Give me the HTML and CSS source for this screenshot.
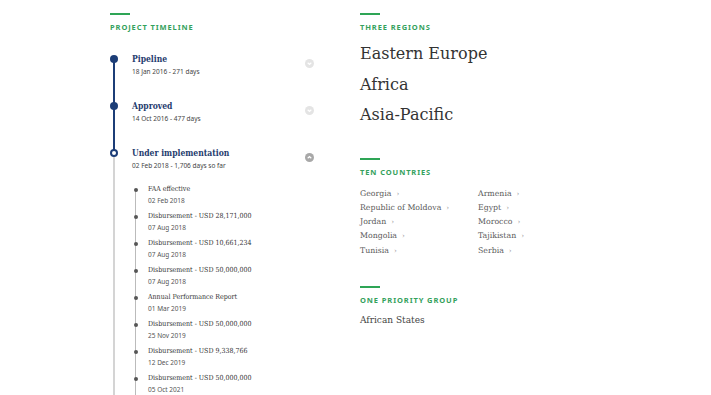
FILE: index.html
```html
<!DOCTYPE html>
<html lang="en">
<head>
    <meta charset="UTF-8">
    <meta name="viewport" content="width=device-width, initial-scale=1.0">
    <title>Project overview</title>
    <link rel="stylesheet" href="styles.css">
</head>
<body>
    <div class="page">
        <section class="col timeline-col">
            <div class="label">Project timeline</div>
            <ol class="stages">
                <li class="stage done">
                    <div class="stage-head">
                        <div>
                            <div class="stage-title">Pipeline</div>
                            <div class="stage-date">18 Jan 2016 - 271 days</div>
                        </div>
                        <span class="toggle"><svg viewBox="0 0 10 10"><path d="M3 4.2 5 6 7 4.2" /></svg></span>
                    </div>
                </li>
                <li class="stage done">
                    <div class="stage-head">
                        <div>
                            <div class="stage-title">Approved</div>
                            <div class="stage-date">14 Oct 2016 - 477 days</div>
                        </div>
                        <span class="toggle"><svg viewBox="0 0 10 10"><path d="M3 4.2 5 6 7 4.2" /></svg></span>
                    </div>
                </li>
                <li class="stage current">
                    <div class="stage-head">
                        <div>
                            <div class="stage-title">Under implementation</div>
                            <div class="stage-date">02 Feb 2018 - 1,706 days so far</div>
                        </div>
                        <span class="toggle open"><svg viewBox="0 0 10 10"><path d="M3 5.8 5 4 7 5.8" /></svg></span>
                    </div>
                    <ul class="events">
                        <li class="event"><div class="event-title">FAA effective</div><div class="event-date">02 Feb 2018</div></li>
                        <li class="event"><div class="event-title">Disbursement - USD 28,171,000</div><div class="event-date">07 Aug 2018</div></li>
                        <li class="event"><div class="event-title">Disbursement - USD 10,661,234</div><div class="event-date">07 Aug 2018</div></li>
                        <li class="event"><div class="event-title">Disbursement - USD 50,000,000</div><div class="event-date">07 Aug 2018</div></li>
                        <li class="event"><div class="event-title">Annual Performance Report</div><div class="event-date">01 Mar 2019</div></li>
                        <li class="event"><div class="event-title">Disbursement - USD 50,000,000</div><div class="event-date">25 Nov 2019</div></li>
                        <li class="event"><div class="event-title">Disbursement - USD 9,338,766</div><div class="event-date">12 Dec 2019</div></li>
                        <li class="event"><div class="event-title">Disbursement - USD 50,000,000</div><div class="event-date">05 Oct 2021</div></li>
                    </ul>
                </li>
            </ol>
        </section>

        <section class="col info-col">
            <div class="label">Three regions</div>
            <ul class="regions">
                <li>Eastern Europe</li>
                <li>Africa</li>
                <li>Asia-Pacific</li>
            </ul>

            <div class="label">Ten countries</div>
            <ul class="countries">
                <li>Georgia</li>
                <li>Armenia</li>
                <li>Republic of Moldova</li>
                <li>Egypt</li>
                <li>Jordan</li>
                <li>Morocco</li>
                <li>Mongolia</li>
                <li>Tajikistan</li>
                <li>Tunisia</li>
                <li>Serbia</li>
            </ul>

            <div class="label">One priority group</div>
            <div class="group">African States</div>
        </section>
    </div>
</body>
</html>
```

FILE: styles.css
```css
body {
    margin: 0;
    padding: 0;
    background-color: #fff;
    font-family: 'DejaVu Serif', serif;
    overflow: hidden;
}
ul, ol {
    list-style: none;
    margin: 0;
    padding: 0;
}
.page {
    display: flex;
    gap: 45px;
    padding: 13px 0 0 110px;
    height: 395px;
    box-sizing: border-box;
}
.col {
    display: flex;
    flex-direction: column;
}
.timeline-col {
    width: 205px;
}
.info-col {
    width: 240px;
}
.label {
    font-family: 'Noto Sans', sans-serif;
    font-size: 7.5px;
    font-weight: 700;
    letter-spacing: 0.9px;
    line-height: 10px;
    text-transform: uppercase;
    color: #34a15c;
}
.label::before {
    content: "";
    display: block;
    width: 20px;
    height: 2px;
    background-color: #2ea556;
    margin-bottom: 7px;
}

/* main timeline */
.stages {
    margin-top: 21px;
}
.stage {
    position: relative;
    padding-left: 22px;
    padding-bottom: 22px;
}
.stage::before {
    content: "";
    position: absolute;
    left: 3px;
    top: 6px;
    bottom: -6px;
    width: 2px;
    background-color: #1c3d77;
}
.stage::after {
    content: "";
    position: absolute;
    left: 0;
    top: 2px;
    width: 8px;
    height: 8px;
    border-radius: 50%;
    background-color: #1c3d77;
    box-sizing: border-box;
}
.stage.current::before {
    background-color: #d4d4d4;
    bottom: -400px;
}
.stage.current::after {
    background-color: #fff;
    border: 2px solid #1c3d77;
}
.stage-head {
    display: flex;
    align-items: flex-start;
    justify-content: space-between;
}
.stage-title {
    font-family: 'DejaVu Serif Condensed', 'DejaVu Serif', serif;
    font-stretch: condensed;
    font-size: 8.5px;
    font-weight: 700;
    line-height: 12px;
    color: #1f3c6e;
}
.stage-date {
    font-family: 'Noto Sans', sans-serif;
    font-size: 6.5px;
    line-height: 13px;
    color: #444;
}
.toggle {
    width: 9px;
    height: 9px;
    margin-top: 6px;
    border-radius: 50%;
    background-color: #e4e4e4;
    display: flex;
    margin-right: 1px;
}
.toggle.open {
    background-color: #a8a8a8;
}
.toggle svg {
    width: 9px;
    height: 9px;
    fill: none;
    stroke: #fff;
    stroke-width: 1.3;
}

/* sub events */
.events {
    margin-top: 12px;
    position: relative;
}
.event {
    position: relative;
    padding-left: 16px;
    margin-bottom: 5px;
}
.event::before {
    content: "";
    position: absolute;
    left: 2.5px;
    top: 6px;
    bottom: -11px;
    width: 1.5px;
    background-color: #bbb;
}
.event::after {
    content: "";
    position: absolute;
    left: 1.5px;
    top: 4px;
    width: 4px;
    height: 4px;
    border-radius: 50%;
    background-color: #555;
}
.event-title {
    font-family: 'DejaVu Serif Condensed', 'DejaVu Serif', serif;
    font-stretch: condensed;
    font-size: 7px;
    line-height: 11px;
    color: #333;
}
.event-date {
    font-family: 'Noto Sans', sans-serif;
    font-size: 6.5px;
    line-height: 11px;
    color: #555;
}

/* right column */
.regions {
    margin: 7px 0 27px;
}
.regions li {
    font-size: 16px;
    line-height: 30.5px;
    color: #333;
}
.countries {
    display: grid;
    grid-template-columns: 118px 118px;
    margin: 10px 0 28px;
}
.countries li {
    font-size: 7.8px;
    line-height: 14.25px;
    color: #5a5a5a;
}
.countries li::after {
    content: "\203A";
    margin-left: 5px;
    color: #888;
    font-size: 7px;
}
.group {
    margin-top: 8px;
    font-size: 9px;
    line-height: 14px;
    color: #444;
}
```
